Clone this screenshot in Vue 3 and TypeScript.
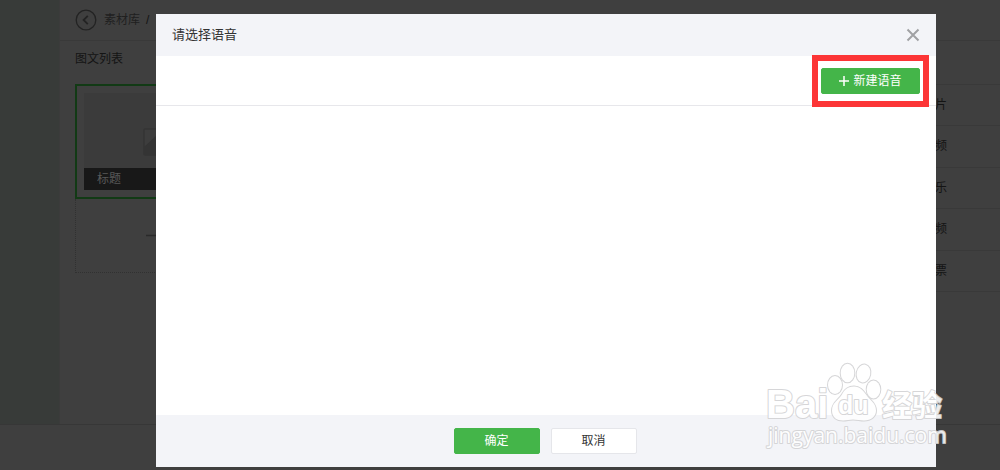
<script setup lang="ts">
import { ref } from 'vue'

const open = ref(true)
const kinds: string[] = ['片', '频', '乐', '频', '票']

function close(): void {
  open.value = false
}
</script>

<template>
  <div class="page">
    <div class="workspace">
      <aside class="sidebar"></aside>
      <main class="content">
        <header class="crumbs">
          <a class="back" href="#" aria-label="返回">
            <svg width="22" height="22" viewBox="0 0 22 22" fill="none" stroke="#232323">
              <circle cx="11" cy="11" r="9.8" stroke-width="1.3" />
              <path d="M12.8 6.8 8.6 11l4.2 4.2" stroke-width="1.8" />
            </svg>
          </a>
          <a class="crumb" href="#">素材库</a>
          <span class="slash">/</span>
        </header>
        <div class="columns">
          <section class="articles">
            <h2>图文列表</h2>
            <div class="card">
              <div class="cover">
                <svg class="thumb" width="34" height="28" viewBox="0 0 34 28">
                  <rect x="1" y="1" width="32" height="26" rx="1" fill="#3d3d3d" stroke="#343434" stroke-width="1.5" />
                  <path d="M1 19 15 6l18 15v6H1z" fill="#343434" />
                </svg>
                <div class="caption">标题</div>
              </div>
            </div>
            <div class="add">
              <svg width="29" height="29" viewBox="0 0 29 29" stroke="#2a2a2a" stroke-width="1.5">
                <path d="M0 14.5h29M14.5 0v29" />
              </svg>
            </div>
          </section>
          <nav class="kinds">
            <ul>
              <li v-for="(kind, i) in kinds" :key="i">{{ kind }}</li>
            </ul>
          </nav>
        </div>
      </main>
    </div>
    <div class="bottom"></div>

    <div v-if="open" class="overlay">
      <section class="dialog" role="dialog" aria-labelledby="dialog-title">
        <header class="dialog-head">
          <h1 id="dialog-title">请选择语音</h1>
          <button class="close" type="button" aria-label="关闭" @click="close">
            <svg width="14" height="14" viewBox="0 0 14 14" stroke="#a0a1a4" stroke-width="2">
              <path d="m1.5 1.5 11 11m0-11-11 11" />
            </svg>
          </button>
        </header>
        <div class="toolbar">
          <div class="marked">
            <button class="btn primary create" type="button">
              <svg width="10" height="10" viewBox="0 0 10 10" stroke="#fff" stroke-width="1.5">
                <path d="M0 5h10M5 0v10" />
              </svg>
              新建语音
            </button>
          </div>
        </div>
        <div class="list"></div>
        <footer class="dialog-foot">
          <button class="btn primary" type="button" @click="close">确定</button>
          <button class="btn plain" type="button" @click="close">取消</button>
        </footer>
      </section>
    </div>

    <svg class="watermark" width="190" height="90" viewBox="0 0 190 90">
      <g class="ink">
        <text class="latin" x="2" y="58">Bai</text>
        <ellipse cx="71" cy="25" rx="7" ry="9" />
        <ellipse cx="83.5" cy="13" rx="6.8" ry="9.3" />
        <ellipse cx="99.5" cy="13.5" rx="6.8" ry="9" transform="rotate(12 99.5 13.5)" />
        <ellipse cx="109.5" cy="29.500" rx="6.8" ry="9" />
        <path d="M90 26.5c-7 0-10 4-12 8-3 5-10 8-10 16 0 7 5 10 11 10 4 0 6-1 10-1s7 1 11 1c7 0 12-4 12-10 0-8-7-11-10-16-3-4-6-8-12-8z" />
        <text class="du" x="74" y="54">du</text>
        <text class="cjk" x="118" y="56">经验</text>
        <text class="url" x="4" y="83">jingyan.baidu.com</text>
      </g>
    </svg>
  </div>
</template>

<style>
body {
  margin: 0;
}
</style>

<style scoped>
.page {
  position: relative;
  display: flex;
  flex-direction: column;
  min-height: 100vh;
  overflow: hidden;
  background: #3f3f3f;
  color: #141414;
  font-family: "Liberation Sans", "Noto Sans CJK SC", sans-serif;
  font-size: 12px;
  line-height: 18px;
}
.workspace {
  flex: 1;
  display: flex;
}
.sidebar {
  width: 59px;
  background: #383b39;
  border-right: 1px solid #3b3b3b;
}
.content {
  flex: 1;
}
.crumbs {
  display: flex;
  align-items: center;
  height: 40px;
  padding-left: 15px;
  border-bottom: 1px solid #393939;
}
.back {
  display: flex;
}
.crumb {
  margin-left: 7px;
  color: #202020;
  text-decoration: none;
}
.slash {
  margin-left: 6px;
}
.columns {
  display: flex;
  justify-content: space-between;
}
.articles {
  width: 300px;
  padding-left: 15px;
}
h2 {
  margin: 9px 0 16px;
  font-size: 12px;
  font-weight: 400;
  line-height: 18px;
}
.card {
  padding: 7px;
  border: 2px solid #123a15;
}
.cover {
  box-sizing: border-box;
  display: flex;
  flex-direction: column;
  align-items: center;
  justify-content: space-between;
  height: 97px;
  padding-top: 35px;
  background: #3b3b3b;
}
.thumb {
  margin-right: 130px;
}
.caption {
  align-self: stretch;
  padding: 2px 13px;
  background: #181818;
  color: #595959;
}
.add {
  display: flex;
  align-items: center;
  height: 73px;
  padding-left: 70px;
  border: 1px dotted #313131;
  border-top: 0;
}
.kinds {
  width: 200px;
  padding-top: 43px;
}
.kinds ul {
  margin: 0;
  padding: 0;
  list-style: none;
  border-top: 1px solid #393939;
}
.kinds li {
  height: 41px;
  padding-left: 135px;
  border-bottom: 1px solid #393939;
  line-height: 41px;
}
.kinds li:nth-child(odd) {
  height: 40px;
}
.bottom {
  height: 45px;
  border-top: 1px solid #373737;
}
.overlay {
  position: absolute;
  inset: 0;
  display: flex;
  padding: 14px 64px 3px 156px;
}
.dialog {
  flex: 1;
  display: flex;
  flex-direction: column;
  background: #fff;
}
.dialog-head {
  display: flex;
  align-items: center;
  justify-content: space-between;
  height: 42px;
  padding: 0 16px;
  background: #f3f4f8;
}
h1 {
  margin: 0;
  color: #333;
  font-size: 13px;
  font-weight: 400;
}
.close {
  display: flex;
  padding: 0;
  border: 0;
  background: none;
}
.toolbar {
  display: flex;
  align-items: center;
  justify-content: flex-end;
  height: 49px;
  padding-right: 16px;
  border-bottom: 1px solid #e7e7eb;
}
.marked {
  position: relative;
}
.marked::after {
  content: "";
  position: absolute;
  inset: -13px -9px;
  border: 6px solid #fc3536;
  pointer-events: none;
}
.btn {
  box-sizing: border-box;
  width: 86px;
  height: 26px;
  padding: 0;
  border: 1px solid #e5e6ea;
  border-radius: 2px;
  font: inherit;
  line-height: 24px;
}
.primary {
  border-color: #44b549;
  background: #44b549;
  color: #fff;
}
.plain {
  background: #fff;
  color: #333;
}
.create {
  display: flex;
  align-items: center;
  justify-content: center;
  gap: 4px;
  width: 99px;
}
.list {
  flex: 1;
}
.dialog-foot {
  display: flex;
  align-items: center;
  justify-content: center;
  gap: 11px;
  height: 52px;
  padding-right: 2px;
  background: #f3f4f8;
}
.watermark {
  position: absolute;
  right: 46px;
  bottom: 20px;
  pointer-events: none;
}
.ink {
  fill: #fff;
  stroke: #d2d2d4;
  stroke-width: 2;
  stroke-linejoin: round;
  paint-order: stroke;
  opacity: 0.9;
}
.latin,
.du {
  font-family: "Liberation Sans", sans-serif;
  font-weight: 700;
}
.latin {
  font-size: 40px;
}
.du {
  font-size: 25px;
}
.cjk {
  font-family: "Noto Sans CJK SC", sans-serif;
  font-size: 30px;
  font-weight: 700;
}
.url {
  font-family: "Open Sans", sans-serif;
  font-size: 21px;
}
</style>
